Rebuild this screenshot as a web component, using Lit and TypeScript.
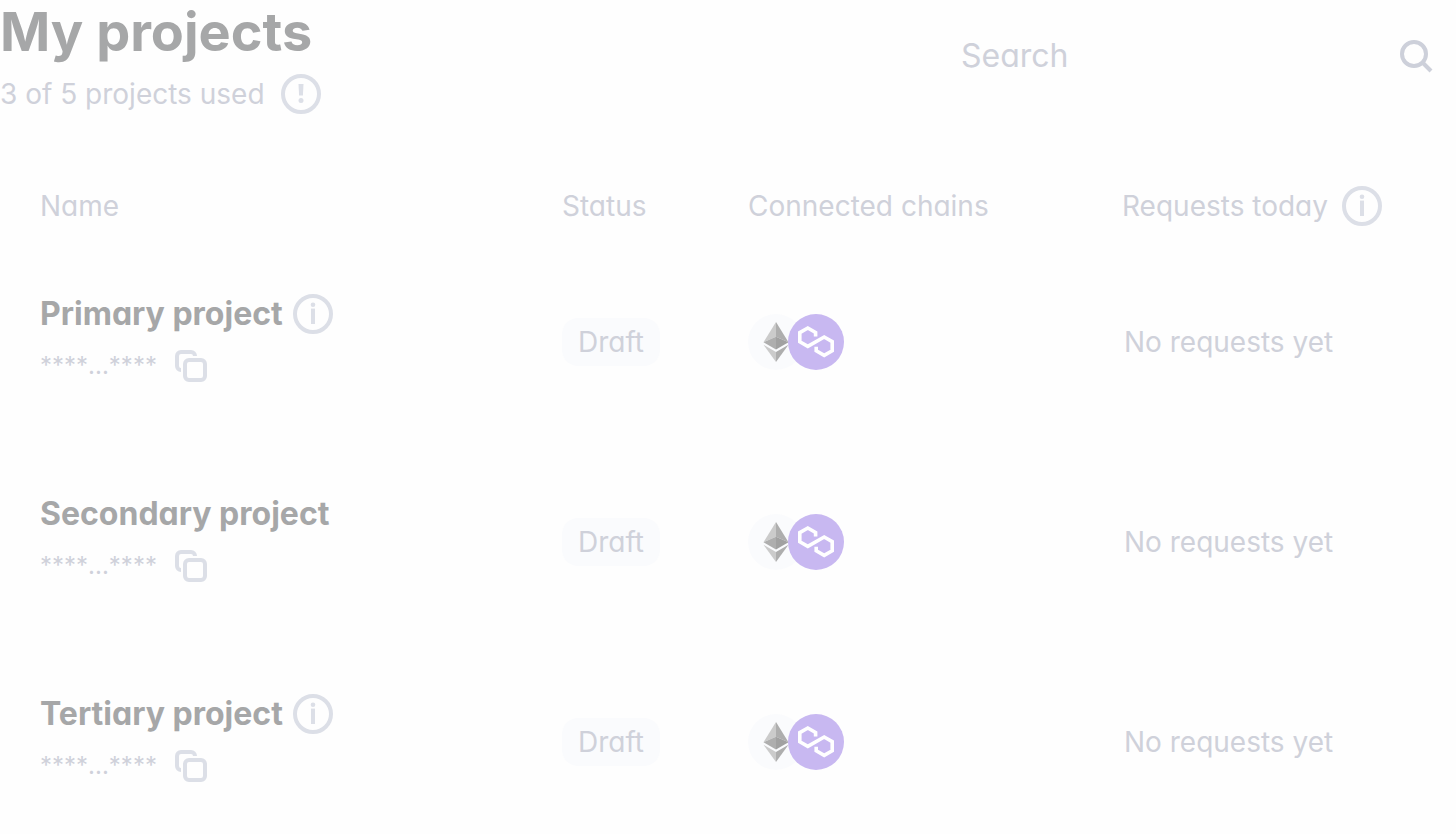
import { LitElement, html, css, svg } from "lit";
import { customElement, state } from "lit/decorators.js";

interface Project {
  name: string;
  key: string;
  note: boolean;
}

const infoIcon = html`<svg class="round" viewBox="0 0 40 40" aria-hidden="true">
  <circle cx="20" cy="20" r="18" fill="none" stroke="currentColor" stroke-width="4" />
  <circle cx="20" cy="10.8" r="2.3" fill="currentColor" />
  <rect x="18" y="14.6" width="4" height="15.4" fill="currentColor" />
</svg>`;

const alertIcon = html`<svg class="round" viewBox="0 0 40 40" aria-hidden="true">
  <circle cx="20" cy="20" r="18" fill="none" stroke="currentColor" stroke-width="4" />
  <path d="M17.5 10h5l-.6 11.4h-3.8z" fill="currentColor" />
  <circle cx="20" cy="26.6" r="2.5" fill="currentColor" />
</svg>`;

const copyIcon = html`<svg class="copy-icon" viewBox="0 0 32 32" fill="none" stroke="currentColor" stroke-width="4" aria-hidden="true">
  <rect x="10" y="10" width="20" height="20" rx="4" />
  <path d="M20 6a4 4 0 0 0-4-4H6a4 4 0 0 0-4 4v10a4 4 0 0 0 4 4" />
</svg>`;

const searchIcon = html`<svg class="search-icon" viewBox="0 0 40 40" fill="none" stroke="currentColor" stroke-width="4" aria-hidden="true">
  <circle cx="18" cy="18" r="12" />
  <path d="M26 26l9 9" />
</svg>`;

const ethereum = html`<svg class="chain" viewBox="0 0 56 56" role="img" aria-label="Ethereum">
  <circle cx="28" cy="28" r="28" fill="#fafbfd" />
  ${svg`<g transform="translate(.5 1.33) scale(1.6667)">
    <path fill="#aeaeae" d="M16.498 4v8.87l7.497 3.35z" />
    <path fill="#cbcbcb" d="M16.498 4L9 16.22l7.498-3.35z" />
    <path fill="#aeaeae" d="M16.498 21.968v6.027L24 17.616z" />
    <path fill="#cbcbcb" d="M16.498 27.995v-6.028L9 17.616z" />
    <path fill="#a1a1a1" d="M16.498 20.573l7.497-4.353-7.497-3.348z" />
    <path fill="#aeaeae" d="M9 16.22l7.498 4.353v-7.701z" />
  </g>`}
</svg>`;

const polygon = html`<svg class="chain" viewBox="0 0 56 56" role="img" aria-label="Polygon">
  <circle cx="28" cy="28" r="28" fill="#c8b8f1" />
  <path fill="none" stroke="#fff" stroke-width="3.6" d="M27.6 22.5v-4L19.8 14l-8 4.6v9.2l8 4.6L36.2 23l8 4.6v9.2l-8 4.6-8-4.6v-4" />
</svg>`;

@customElement("app-root")
export class AppRoot extends LitElement {
  @state() private query = "";

  private limit = 5;

  private projects: Project[] = [
    { name: "Primary project", key: "****...****", note: true },
    { name: "Secondary project", key: "****...****", note: false },
    { name: "Tertiary project", key: "****...****", note: true },
  ];

  static styles = css`
    :host {
      display: block;
      min-height: 100vh;
      background: #fefefe;
      color: #cfd1da;
      font: 400 28px/40px Inter, "Liberation Sans", sans-serif;
      font-feature-settings: "cv11";
    }
    header {
      display: flex;
      justify-content: space-between;
      height: 170px;
    }
    h1 {
      margin: 0;
      color: #a6a7a8;
      font-size: 54px;
      line-height: 64px;
      font-weight: 700;
    }
    .usage,
    .title,
    .key {
      display: flex;
      align-items: center;
    }
    .usage {
      margin: 10px 0 0;
      gap: 16px;
    }
    svg {
      display: block;
      flex: none;
    }
    button {
      padding: 0;
      border: 0;
      background: none;
      color: #dcdfe7;
      cursor: pointer;
    }
    .round {
      width: 40px;
      height: 40px;
    }
    .search {
      display: flex;
      align-items: center;
      width: 34%;
      height: 112px;
      padding-right: 20px;
      box-sizing: border-box;
    }
    .search input {
      flex: 1;
      min-width: 0;
      padding: 0;
      border: 0;
      outline: 0;
      background: none;
      color: inherit;
      font: inherit;
      font-size: 32px;
      font-feature-settings: inherit;
    }
    .search input::placeholder {
      color: #cfd1da;
      opacity: 1;
    }
    .search button {
      color: #cdd0da;
    }
    .search-icon {
      width: 40px;
      height: 40px;
    }
    table {
      width: 100%;
      border-collapse: collapse;
      table-layout: fixed;
    }
    .col-status {
      width: 186px;
    }
    .col-chains {
      width: 374px;
    }
    .col-requests {
      width: 334px;
    }
    th {
      height: 72px;
      padding: 0;
      font-weight: 400;
      text-align: left;
    }
    .title {
      gap: 14px;
      height: 40px;
    }
    td .title {
      gap: 10px;
    }
    td {
      padding: 56px 0;
    }
    td:last-child {
      padding-left: 2px;
    }
    .name {
      padding: 52px 0 60px;
      padding-left: 40px;
    }
    th.name {
      padding: 0 0 0 40px;
    }
    tr:last-child td {
      padding-bottom: 48px;
    }
    tr:last-child td.name {
      padding-bottom: 52px;
    }
    h2 {
      margin: 0;
      color: #a6a7a8;
      font-size: 32px;
      line-height: 42px;
      font-weight: 700;
    }
    .key {
      gap: 18px;
      height: 32px;
      margin-top: 16px;
      font-size: 24px;
      font-kerning: none;
    }
    .copy-icon {
      width: 32px;
      height: 32px;
    }
    .badge {
      display: inline-block;
      padding: 4px 16px;
      border-radius: 16px;
      background: #fafbfd;
    }
    .chains {
      display: flex;
    }
    .chain {
      width: 56px;
      height: 56px;
    }
    .chain + .chain {
      margin-left: -16px;
    }
  `;

  private onSearch(e: Event) {
    this.query = (e.target as HTMLInputElement).value;
  }

  private row(p: Project) {
    return html`<tr>
      <td class="name">
        <div class="title">
          <h2>${p.name}</h2>
          ${p.note ? html`<button aria-label="About ${p.name}">${infoIcon}</button>` : null}
        </div>
        <div class="key">
          <span>${p.key}</span>
          <button aria-label="Copy key of ${p.name}">${copyIcon}</button>
        </div>
      </td>
      <td><span class="badge">Draft</span></td>
      <td><div class="chains">${ethereum}${polygon}</div></td>
      <td>No requests yet</td>
    </tr>`;
  }

  render() {
    const q = this.query.trim().toLowerCase();
    const shown = this.projects.filter((p) => p.name.toLowerCase().includes(q));
    return html`
      <header>
        <div>
          <h1>My projects</h1>
          <p class="usage">
            <span>${this.projects.length} of ${this.limit} projects used</span>
            <button aria-label="About project limits">${alertIcon}</button>
          </p>
        </div>
        <form class="search" role="search" @submit=${(e: Event) => e.preventDefault()}>
          <input type="text" placeholder="Search" aria-label="Search" .value=${this.query} @input=${this.onSearch} />
          <button aria-label="Run search">${searchIcon}</button>
        </form>
      </header>
      <table>
        <colgroup>
          <col />
          <col class="col-status" />
          <col class="col-chains" />
          <col class="col-requests" />
        </colgroup>
        <thead>
          <tr>
            <th class="name" scope="col">Name</th>
            <th scope="col">Status</th>
            <th scope="col">Connected chains</th>
            <th scope="col">
              <div class="title">Requests today <button aria-label="About requests">${infoIcon}</button></div>
            </th>
          </tr>
        </thead>
        <tbody>
          ${shown.map((p) => this.row(p))}
        </tbody>
      </table>
    `;
  }
}
